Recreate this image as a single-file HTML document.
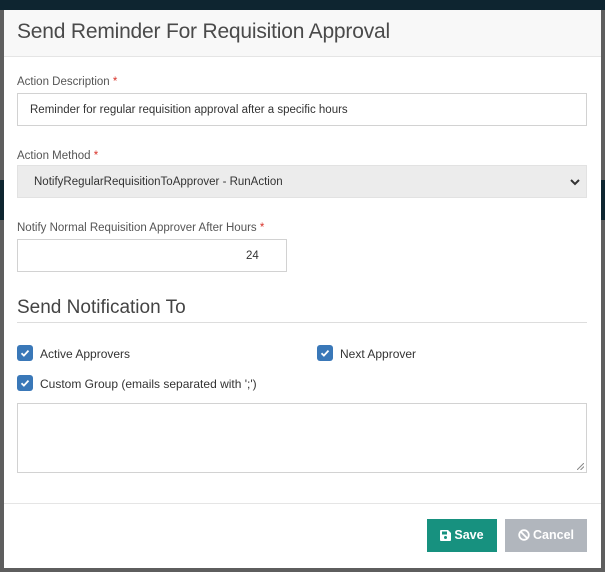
<!DOCTYPE html>
<html><head><meta charset="utf-8"><style>
*{box-sizing:border-box;margin:0;padding:0}
body{width:605px;height:572px;background:#5e5e5e;position:relative;overflow:hidden;font-family:"Liberation Sans",sans-serif;color:#333}
.topbar{position:absolute;left:0;top:0;width:605px;height:10px;background:#0e2530}
.band{position:absolute;top:180px;height:40px;width:5px;background:#0e2530}
.modal{position:absolute;left:4px;top:10px;width:597px;height:558px;background:#fff}
.hdr{position:absolute;left:0;top:0;width:597px;height:47px;background:#f8f8f8;border-bottom:1px solid #e5e5e5}
.hdr h1{position:absolute;left:13px;top:10px;font-weight:normal;font-size:21px;color:#4a4a4a;letter-spacing:-0.2px}
.a{position:absolute}
.lbl{font-size:11.5px;color:#555}
.lbl span{color:#d9342b}
.inp{border:1px solid #d2d2d2;background:#fff;font-size:11.5px;color:#333}
.cb{width:16px;height:16px;background:#3a78b8;border-radius:3px}
.cb svg{display:block}
.ct{font-size:12px;color:#333}
.btn{color:#fff;font-size:12.5px;font-weight:bold;text-align:center;line-height:33px}
.btn svg{margin-right:3px}
</style></head><body>
<div class="topbar"></div>
<div class="band" style="left:0"></div><div class="band" style="left:600px"></div>
<div class="modal">
<div class="hdr"><h1>Send Reminder For Requisition Approval</h1></div>
<div class="a lbl" style="left:13px;top:66px">Action Description <span>*</span></div>
<div class="a inp" style="left:13px;top:83px;width:570px;height:33px;padding:10px 12px">Reminder for regular requisition approval after a specific hours</div>
<div class="a lbl" style="left:13px;top:140px">Action Method <span>*</span></div>
<div class="a inp" style="left:13px;top:155px;width:570px;height:33px;padding:10px 16px;background:#ececec;border-color:#e2e2e2">NotifyRegularRequisitionToApprover - RunAction
<svg style="position:absolute;right:6px;top:12px" width="10" height="8" viewBox="0 0 10 8"><path d="M1 2l4 4 4-4" stroke="#333" stroke-width="2" fill="none"/></svg></div>
<div class="a lbl" style="left:13px;top:212px">Notify Normal Requisition Approver After Hours <span>*</span></div>
<div class="a inp" style="left:13px;top:229px;width:270px;height:33px;padding:10px 0 0 228px">24</div>
<div class="a" style="left:13px;top:287px;font-size:19px;color:#444">Send Notification To</div>
<div class="a" style="left:13px;top:312px;width:570px;height:1px;background:#ddd"></div>
<div class="a cb" style="left:13px;top:335px"><svg width="16" height="16"><path d="M4.5 8.2l2.4 2.4 4.6-5" stroke="#fff" stroke-width="1.8" fill="none"/></svg></div>
<div class="a ct" style="left:36px;top:337px">Active Approvers</div>
<div class="a cb" style="left:313px;top:335px"><svg width="16" height="16"><path d="M4.5 8.2l2.4 2.4 4.6-5" stroke="#fff" stroke-width="1.8" fill="none"/></svg></div>
<div class="a ct" style="left:336px;top:337px">Next Approver</div>
<div class="a cb" style="left:13px;top:365px"><svg width="16" height="16"><path d="M4.5 8.2l2.4 2.4 4.6-5" stroke="#fff" stroke-width="1.8" fill="none"/></svg></div>
<div class="a ct" style="left:36px;top:367px">Custom Group (emails separated with ';')</div>
<div class="a inp" style="left:13px;top:393px;width:570px;height:70px">
<svg style="position:absolute;right:2px;bottom:2px" width="7" height="7"><path d="M0 7L7 0M3.5 7L7 3.5" stroke="#888" stroke-width="1"/></svg></div>
<div class="a" style="left:0;top:493px;width:597px;height:1px;background:#e5e5e5"></div>
<div class="a btn" style="left:423px;top:509px;width:70px;height:33px;background:#17917f">
<svg style="vertical-align:-2px" width="11" height="11" viewBox="0 0 11 11"><path d="M0 1a1 1 0 0 1 1-1h7l3 3v7a1 1 0 0 1-1 1H1a1 1 0 0 1-1-1z" fill="#fff"/><rect x="2" y="1.5" width="5" height="3" fill="#17917f"/><circle cx="5.5" cy="7.5" r="1.5" fill="#17917f"/></svg>Save</div>
<div class="a btn" style="left:501px;top:509px;width:82px;height:33px;background:#b1b6bd">
<svg style="vertical-align:-2px" width="12" height="12" viewBox="0 0 12 12"><circle cx="6" cy="6" r="4.8" stroke="#fff" stroke-width="1.8" fill="none"/><path d="M2.8 2.8l6.4 6.4" stroke="#fff" stroke-width="1.8"/></svg>Cancel</div>
</div>
</body></html>
